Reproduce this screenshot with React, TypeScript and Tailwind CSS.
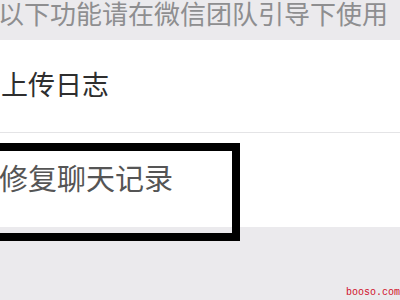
import React from "react";

export default function App() {
  const cjk = { fontFamily: '"Noto Sans CJK SC", "Noto Sans", sans-serif' };
  return (
    <div className="relative w-[400px] h-[300px] overflow-hidden bg-[#ebeaed]" style={cjk}>
      <div className="h-[40px] flex items-start">
        <div className="ml-[-2px] mt-[0px] text-[26px] leading-[26px] text-[#8e8e90] whitespace-nowrap">
          以下功能请在微信团队引导下使用
        </div>
      </div>
      <div className="bg-white h-[93px] flex items-center border-b border-[#e4e4e6]">
        <div className="ml-[1px] mt-[-4px] text-[27px] leading-[36px] text-[#2e2e2e] whitespace-nowrap">上传日志</div>
      </div>
      <div className="bg-white h-[94px] flex items-center">
        <div className="ml-[-1px] mt-[-6px] text-[29px] leading-[36px] text-[#555] whitespace-nowrap">修复聊天记录</div>
      </div>
      <div className="absolute left-[-10px] top-[143px] w-[250px] h-[98px] border-[8px] border-black" />
      <div
        className="absolute right-[0px] bottom-[1px] text-[10px] leading-[12px] text-[#d0112b]"
        style={{ fontFamily: '"Liberation Mono", monospace' }}
      >
        booso.com
      </div>
    </div>
  );
}
